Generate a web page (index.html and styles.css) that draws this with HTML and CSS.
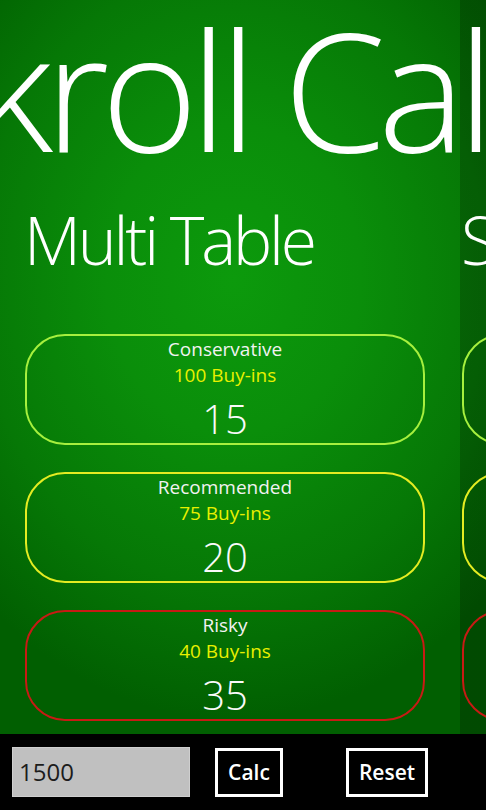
FILE: index.html
```html
<!DOCTYPE html>
<html>
<head>
<meta charset="utf-8">
<link rel="stylesheet" href="styles.css">
</head>
<body>
<div class="screen">
  <div class="pano">
    <h1 class="pano-title">Bankroll Calculator</h1>
    <div class="sections">
      <section class="section">
        <h2 class="section-title">Multi Table</h2>
        <div class="cards">
          <div class="card card-safe">
            <div class="card-label">Conservative</div>
            <div class="card-buyins">100 Buy-ins</div>
            <div class="card-value">15</div>
          </div>
          <div class="card card-mid">
            <div class="card-label">Recommended</div>
            <div class="card-buyins">75 Buy-ins</div>
            <div class="card-value">20</div>
          </div>
          <div class="card card-risk">
            <div class="card-label">Risky</div>
            <div class="card-buyins">40 Buy-ins</div>
            <div class="card-value">35</div>
          </div>
        </div>
      </section>
      <section class="section">
        <h2 class="section-title">Single Table</h2>
        <div class="cards">
          <div class="card card-safe">
            <div class="card-label">Conservative</div>
            <div class="card-buyins">100 Buy-ins</div>
            <div class="card-value">15</div>
          </div>
          <div class="card card-mid">
            <div class="card-label">Recommended</div>
            <div class="card-buyins">75 Buy-ins</div>
            <div class="card-value">20</div>
          </div>
          <div class="card card-risk">
            <div class="card-label">Risky</div>
            <div class="card-buyins">40 Buy-ins</div>
            <div class="card-value">35</div>
          </div>
        </div>
      </section>
    </div>
  </div>
  <div class="appbar">
    <div class="amount">1500</div>
    <div class="btn btn-calc">Calc</div>
    <div class="btn btn-reset">Reset</div>
  </div>
</div>
</body>
</html>
```

FILE: styles.css
```css
html, body {
  margin: 0;
  padding: 0;
  background: #000;
}

.screen {
  width: 486px;
  height: 810px;
  display: flex;
  flex-direction: column;
  overflow: hidden;
  font-family: "Open Sans", "Noto Sans", "Liberation Sans", sans-serif;
  color: #f4f4f4;
}

.pano {
  height: 734px;
  flex: none;
  overflow: hidden;
  background:
    linear-gradient(to right, rgba(0, 0, 0, 0) 460px, rgba(0, 0, 0, 0.22) 460px),
    radial-gradient(ellipse 75% 60% at 48% 38%, #0c9a0c 0%, #0a8e0a 35%, #067806 70%, #015f01 100%);
}

.pano-title {
  margin: 6px 0 0 -291px;
  font-size: 165px;
  line-height: 165px;
  font-weight: 300;
  letter-spacing: -8px;
  white-space: nowrap;
  color: #fff;
}

.sections {
  display: flex;
  margin-top: 35px;
}

.section {
  flex: none;
  width: 437px;
  box-sizing: border-box;
  padding-left: 25px;
}

.section-title {
  margin: 0 0 0 -1px;
  font-size: 66px;
  line-height: 66px;
  font-weight: 300;
  letter-spacing: -3.2px;
  white-space: nowrap;
  color: #fff;
}

.cards {
  display: flex;
  flex-direction: column;
  gap: 27px;
  margin-top: 62px;
}

.card {
  width: 400px;
  height: 111px;
  box-sizing: border-box;
  border: 2px solid;
  border-radius: 40px;
  display: flex;
  flex-direction: column;
  align-items: center;
  text-align: center;
}

.card-safe { border-color: #a6f03e; }
.card-mid { border-color: #e4ec22; }
.card-risk { border-color: #c81a14; }

.card-label {
  font-size: 19px;
  line-height: 26px;
  color: #f2f2f2;
}

.card-buyins {
  font-size: 19px;
  line-height: 27px;
  color: #e8f000;
}

.card-value {
  padding-top: 8px;
  font-size: 40px;
  line-height: 44px;
  font-weight: 300;
  color: #fafafa;
}

.appbar {
  flex: 1;
  background: #000;
  display: flex;
  align-items: flex-start;
  padding: 13px 0 0 12px;
}

.amount {
  width: 178px;
  height: 50px;
  box-sizing: border-box;
  background: #c0c0c0;
  border: 1px solid #cfcfcf;
  padding-left: 6px;
  font-size: 24px;
  line-height: 48px;
  color: #1c1c1c;
}

.btn {
  height: 49px;
  box-sizing: border-box;
  border: 3px solid #fff;
  margin-top: 1px;
  font-size: 21px;
  line-height: 43px;
  font-weight: 600;
  text-align: center;
  color: #fff;
}

.btn-calc {
  width: 68px;
  margin-left: 25px;
}

.btn-reset {
  width: 82px;
  margin-left: 63px;
}
```
